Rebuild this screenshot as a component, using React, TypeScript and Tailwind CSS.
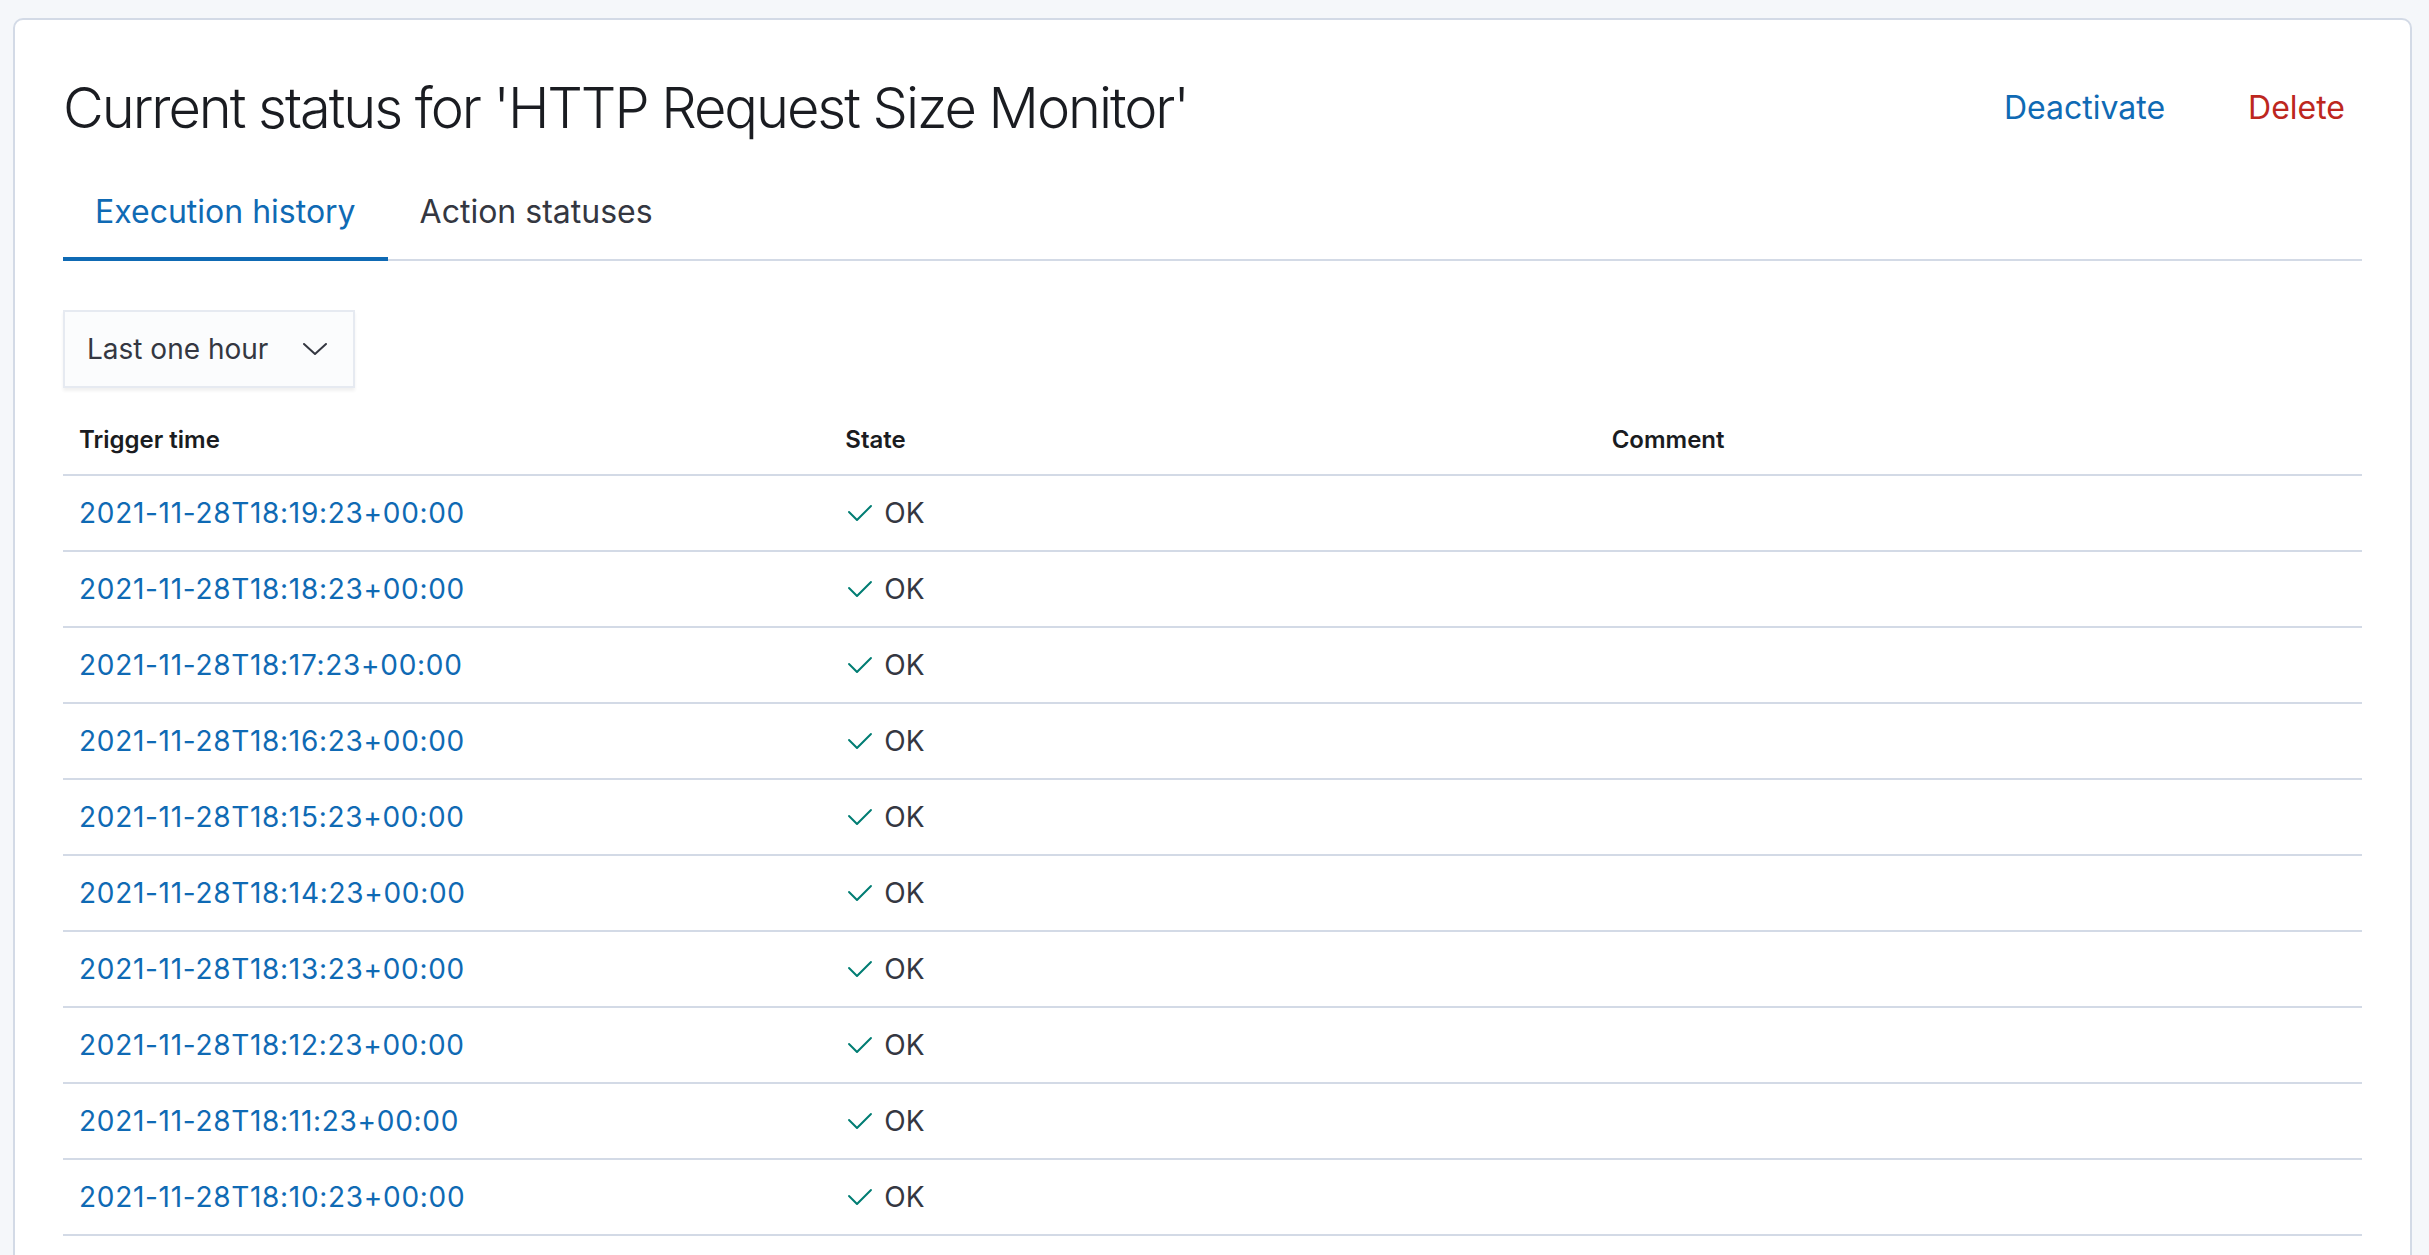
import React from "react";

const rows = [
  "2021-11-28T18:19:23+00:00",
  "2021-11-28T18:18:23+00:00",
  "2021-11-28T18:17:23+00:00",
  "2021-11-28T18:16:23+00:00",
  "2021-11-28T18:15:23+00:00",
  "2021-11-28T18:14:23+00:00",
  "2021-11-28T18:13:23+00:00",
  "2021-11-28T18:12:23+00:00",
  "2021-11-28T18:11:23+00:00",
  "2021-11-28T18:10:23+00:00",
];

function Check() {
  return (
    <svg width="32" height="32" viewBox="0 0 16 16" className="shrink-0">
      <path
        fill="#017d73"
        d="M6.5 12a.502.502 0 01-.354-.146l-4-4a.502.502 0 01.708-.708L6.5 10.793l6.646-6.647a.502.502 0 01.708.708l-7 7A.502.502 0 016.5 12"
      />
    </svg>
  );
}

function Chevron() {
  return (
    <svg width="24" height="12" viewBox="0 0 24 12" fill="none" className="shrink-0">
      <path d="M1 1l11 10L23 1" stroke="#343741" strokeWidth="2" strokeLinecap="round" strokeLinejoin="round" />
    </svg>
  );
}

export default function App() {
  return (
    <div
      className="min-h-[1255px] w-[2429px] bg-[#f5f7fa] pt-[18px] pl-[13px]"
      style={{ fontFamily: "Inter, 'Noto Sans', sans-serif" }}
    >
      <div className="w-[2399px] min-h-[1300px] rounded-[10px] border-2 border-[#d3dae6] bg-white p-[48px]">
        {/* Header */}
        <div className="flex items-center justify-between">
          <h1 className="text-[56px] leading-[80px] font-light text-[#1a1c21] tracking-[-2.05px]">
            Current status for 'HTTP Request Size Monitor'
          </h1>
          <div className="mr-[17px] flex items-center gap-[83px] text-[32px] leading-[48px]">
            <button className="text-[#0f6ab4]">Deactivate</button>
            <button className="text-[#bd271e]">Delete</button>
          </div>
        </div>

        {/* Tabs */}
        <div className="mt-[40px] flex border-b-2 border-[#d3dae6]">
          <button className="-mb-[2px] border-b-4 border-[#0f6ab4] px-[32px] pb-[21px] text-[32px] leading-[48px] text-[#0f6ab4]">
            Execution history
          </button>
          <button className="-mb-[2px] border-b-4 border-transparent px-[32px] pb-[21px] text-[32px] leading-[48px] text-[#343741]">
            Action statuses
          </button>
        </div>

        {/* Select */}
        <div className="mt-[49px] flex h-[78px] w-[292px] items-center justify-between border-2 border-[#e6eaf1] bg-[#fbfcfd] pl-[22px] pr-[26px] shadow-[0_3px_3px_rgba(0,0,0,0.06)]">
          <span className="text-[28px] text-[#343741]">Last one hour</span>
          <Chevron />
        </div>

        {/* Table */}
        <div className="mt-[18px]">
          <div className="grid grid-cols-3 border-b-2 border-[#d3dae6]">
            <div className="px-[16px] py-[16px] text-[24px] leading-[36px] font-semibold text-[#1a1c21]">Trigger time</div>
            <div className="px-[16px] py-[16px] text-[24px] leading-[36px] font-semibold text-[#1a1c21]">State</div>
            <div className="px-[16px] py-[16px] text-[24px] leading-[36px] font-semibold text-[#1a1c21]">Comment</div>
          </div>
          {rows.map((r) => (
            <div key={r} className="grid h-[76px] grid-cols-3 items-center border-b-2 border-[#d3dae6]">
              <div className="px-[16px] text-[28px] tracking-[0.7px] text-[#0f6ab4]">{r}</div>
              <div className="flex items-center px-[15px] text-[28px] text-[#343741]">
                <Check />
                <span className="ml-[8px]">OK</span>
              </div>
              <div className="px-[16px]" />
            </div>
          ))}
        </div>
      </div>
    </div>
  );
}
